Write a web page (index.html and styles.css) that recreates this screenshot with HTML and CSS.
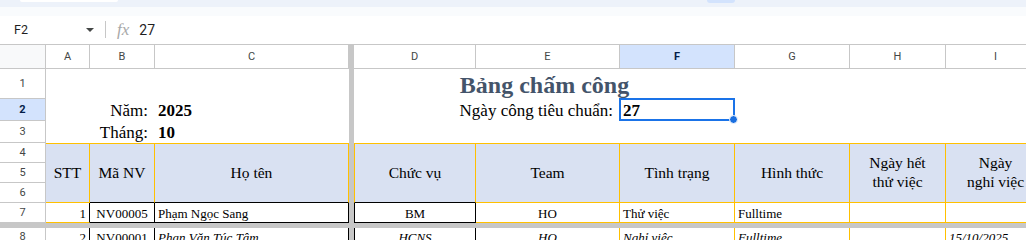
FILE: index.html
```html
<!DOCTYPE html>
<html lang="vi">
<head>
  <meta charset="UTF-8">
  <title>Bảng chấm công</title>
  <link rel="stylesheet" href="styles.css">
</head>
<body>

<div class="top">
  <div class="strip">
    <span class="pill"></span>
    <span class="pill blue"></span>
  </div>
</div>

<div class="formula-bar">
  <div class="name-box"><span>F2</span><span class="caret"></span></div>
  <div class="sep"></div>
  <span class="fx">fx</span>
  <span class="formula">27</span>
</div>

<div class="sheet">
  <div class="freeze-v"></div>
  <div class="freeze-h"></div>

  <!-- column headers -->
  <div class="ch corner"></div>
  <div class="ch">A</div>
  <div class="ch">B</div>
  <div class="ch">C</div>
  <div class="ch">D</div>
  <div class="ch">E</div>
  <div class="ch sel">F</div>
  <div class="ch">G</div>
  <div class="ch">H</div>
  <div class="ch">I</div>

  <!-- row 1 -->
  <div class="rh">1</div>
  <div class="c"></div><div class="c"></div><div class="c"></div>
  <div class="c title">Bảng chấm công</div>
  <div class="c"></div><div class="c"></div><div class="c"></div>

  <!-- row 2 -->
  <div class="rh sel">2</div>
  <div class="c"></div>
  <div class="c info r">Năm:</div>
  <div class="c info b">2025</div>
  <div class="c info r span2">Ngày công tiêu chuẩn:</div>
  <div class="c info b active">27<span class="cursor"><span class="handle"></span></span></div>
  <div class="c"></div><div class="c"></div><div class="c"></div>

  <!-- row 3 -->
  <div class="rh">3</div>
  <div class="c"></div>
  <div class="c info r">Tháng:</div>
  <div class="c info b">10</div>
  <div class="c"></div><div class="c"></div><div class="c"></div>
  <div class="c"></div><div class="c"></div><div class="c"></div>

  <!-- rows 4-6: table header -->
  <div class="rh">4</div>
  <div class="c hd">STT</div>
  <div class="c hd kb">Mã NV</div>
  <div class="c hd kb">Họ tên</div>
  <div class="c hd kb lb">Chức vụ</div>
  <div class="c hd">Team</div>
  <div class="c hd">Tình trạng</div>
  <div class="c hd">Hình thức</div>
  <div class="c hd">Ngày hết<br>thử việc</div>
  <div class="c hd">Ngày<br>nghỉ việc</div>
  <div class="rh">5</div>
  <div class="rh">6</div>

  <!-- row 7 -->
  <div class="rh">7</div>
  <div class="c r kr yb">1</div>
  <div class="c m kr kb">NV00005</div>
  <div class="c kr kb">Phạm Ngọc Sang</div>
  <div class="c m kl kr kb">BM</div>
  <div class="c m yr yb">HO</div>
  <div class="c yr yb">Thử việc</div>
  <div class="c yr yb">Fulltime</div>
  <div class="c yr yb"></div>
  <div class="c yr yb"></div>

  <!-- row 8 -->
  <div class="rh">8</div>
  <div class="c r kr">2</div>
  <div class="c m kr">NV00001</div>
  <div class="c i kr">Phan Văn Túc Tâm</div>
  <div class="c m i kl kr">HCNS</div>
  <div class="c m i yr">HO</div>
  <div class="c i yr">Nghỉ việc</div>
  <div class="c i yr">Fulltime</div>
  <div class="c yr"></div>
  <div class="c i yr">15/10/2025</div>
</div>

</body>
</html>
```

FILE: styles.css
```css
* {
  box-sizing: border-box;
}
body {
  margin: 0;
  width: 1026px;
  height: 240px;
  overflow: hidden;
  background-color: #fff;
  font-family: Roboto, 'Liberation Sans', sans-serif;
}

/* toolbar remains */
.top {
  height: 16px;
  background-color: #f9fbfd;
}
.strip {
  height: 7px;
  background-color: #edf2fa;
  display: flex;
  align-items: flex-start;
}
.pill {
  margin-left: 20px;
  width: 98px;
  height: 2px;
  background-color: #fff;
  border-radius: 0 0 6px 6px;
}
.pill.blue {
  margin-left: 589px;
  width: 28px;
  height: 3px;
  background-color: #d3e3fd;
}

/* formula bar */
.formula-bar {
  height: 29px;
  border-bottom: 1px solid #c7c7c7;
  display: flex;
  align-items: center;
  padding-bottom: 1px;
}
.name-box {
  width: 96px;
  display: flex;
  align-items: center;
  justify-content: space-between;
  padding: 0 2px 0 14px;
  font-size: 12.5px;
  color: #1f1f1f;
}
.caret {
  width: 0;
  height: 0;
  border-left: 4px solid transparent;
  border-right: 4px solid transparent;
  border-top: 4px solid #444746;
}
.sep {
  width: 1px;
  height: 17px;
  margin-left: 9px;
  background-color: #c7c7c7;
}
.fx {
  margin-left: 11px;
  font-family: 'Liberation Serif', serif;
  font-style: italic;
  font-size: 17px;
  color: #a8a8a8;
}
.formula {
  margin-left: 10px;
  font-size: 14px;
  color: #1f1f1f;
}

/* grid */
.sheet {
  display: grid;
  grid-template-columns: 46px 44px 65px 194px 5px 122px 144px 115px 115px 96px 100px;
  grid-template-rows: 24px 30px 22px 22px 20px 20px 20px 20px 5px 18px;
}
.freeze-v {
  grid-column: 5;
  grid-row: 1 / -1;
  background-color: #c7c7c7;
}
.freeze-h {
  grid-column: 1 / -1;
  grid-row: 9;
  background-color: #c7c7c7;
}
.ch, .rh {
  display: flex;
  align-items: center;
  justify-content: center;
  border-right: 1px solid #c7c7c7;
  border-bottom: 1px solid #c7c7c7;
  font-size: 11px;
  color: #444746;
}
.ch.corner {
  background-color: #f8f9fa;
}
.sel {
  background-color: #d3e3fd;
  color: #041e49;
  font-weight: bold;
}

/* cells */
.c {
  display: flex;
  align-items: flex-end;
  padding: 0 3px;
  min-width: 0;
  font-family: 'Liberation Serif', 'Times New Roman', serif;
  font-size: 13px;
  color: #000;
  white-space: nowrap;
}
.c.r {
  justify-content: flex-end;
}
.c.m {
  justify-content: center;
}
.c.b {
  font-weight: bold;
}
.c.i {
  font-style: italic;
}
.title {
  grid-column: span 3;
  justify-content: center;
  font-size: 24px;
  font-weight: bold;
  color: #44546a;
}
.info {
  font-size: 17px;
}
.info.r {
  padding-right: 7px;
}
.span2 {
  grid-column: span 2;
}
.active {
  position: relative;
}
.cursor {
  position: absolute;
  top: -1px;
  left: -1px;
  right: 0;
  bottom: 0;
  border: 2px solid #1a73e8;
}
.handle {
  position: absolute;
  right: -5px;
  bottom: -5px;
  width: 9px;
  height: 9px;
  border-radius: 50%;
  background-color: #1a6fe0;
  border: 1px solid #fff;
}

/* header block */
.hd {
  grid-row: span 3;
  align-items: center;
  justify-content: center;
  text-align: center;
  white-space: normal;
  line-height: 1.2;
  font-size: 15.5px;
  background-color: #d9e1f2;
  border-top: 1px solid #ffc000;
  border-right: 1px solid #ffc000;
  border-bottom: 1px solid #ffc000;
}
.hd.kb {
  border-bottom-color: #000;
}
.hd.lb {
  border-left: 1px solid #ffc000;
}

/* cell borders */
.yr {
  border-right: 1px solid #ffc000;
}
.yb {
  border-bottom: 1px solid #ffc000;
}
.kr {
  border-right: 1px solid #000;
}
.kb {
  border-bottom: 1px solid #000;
}
.kl {
  border-left: 1px solid #000;
}
```
